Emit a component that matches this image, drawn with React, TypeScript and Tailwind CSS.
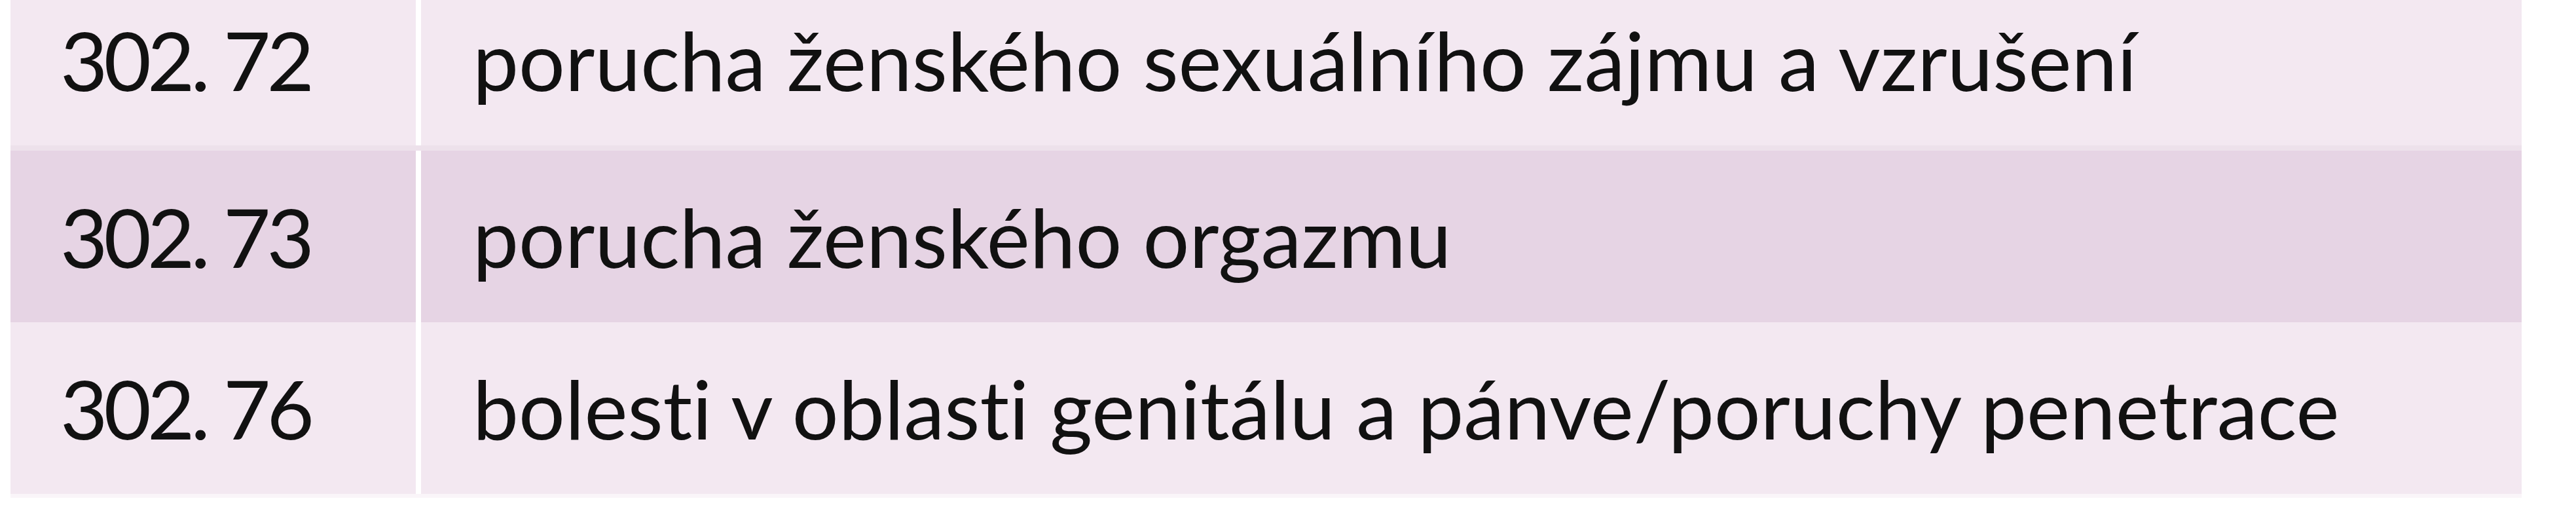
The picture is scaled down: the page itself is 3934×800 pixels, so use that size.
const rows = [
  { code: '302. 72', label: 'porucha ženského sexuálního zájmu a vzrušení', dark: false },
  { code: '302. 73', label: 'porucha ženského orgazmu', dark: true },
  { code: '302. 76', label: 'bolesti v oblasti genitálu a pánve/poruchy penetrace', dark: false },
];

export default function App() {
  return (
    <div className="w-[3934px] h-[800px] bg-white overflow-hidden">
      {/* table, top row is cropped by the screenshot */}
      <div className="-mt-[40px] ml-[16px] w-[3835px] flex flex-col font-['Lato','Open_Sans',sans-serif] text-[125px] leading-none text-[#111] [font-variant-ligatures:none]">
        {rows.map((r, i) => (
          <div
            key={r.code}
            className={`flex ${i === 0 ? 'border-b-[8px] border-[#ede1eb]' : ''}`}
          >
            <div
              className={`w-[619px] h-[262px] flex items-center pl-[76px] tracking-[-6px] ${r.dark ? 'bg-[#e6d4e4]' : 'bg-[#f3e8f1]'}`}
            >
              {r.code}
            </div>
            <div className="w-[8px] bg-white" />
            <div
              className={`flex-1 h-[262px] flex items-center pl-[79px] ${r.dark ? 'bg-[#e6d4e4]' : 'bg-[#f3e8f1]'}`}
            >
              {r.label}
            </div>
          </div>
        ))}
        <div className="h-[6px] bg-[#faf5f9]" />
      </div>
    </div>
  );
}
